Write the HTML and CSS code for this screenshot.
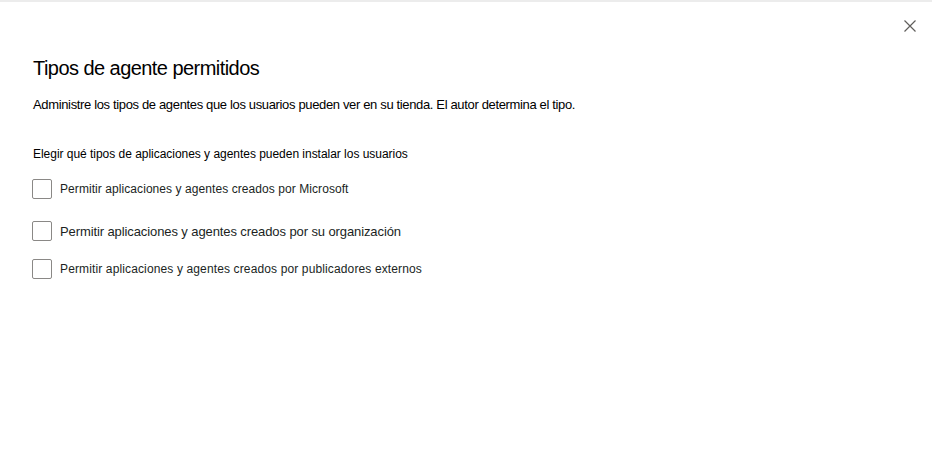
FILE: index.html
```html
<!DOCTYPE html>
<html lang="es">
<head>
<meta charset="utf-8">
<link rel="stylesheet" href="styles.css">
</head>
<body>
<div class="panel">
  <div class="top">
    <button class="close" aria-label="Cerrar">
      <svg width="12" height="12" viewBox="0 0 12 12"><path d="M0.5 0.5 L11.5 11.5 M11.5 0.5 L0.5 11.5" stroke="#605e5c" stroke-width="1.2" fill="none"/></svg>
    </button>
  </div>
  <h1 class="title">Tipos de agente permitidos</h1>
  <p class="desc">Administre los tipos de agentes que los usuarios pueden ver en su tienda. El autor determina el tipo.</p>
  <p class="label">Elegir qué tipos de aplicaciones y agentes pueden instalar los usuarios</p>
  <div class="options">
    <label class="opt"><span class="box"></span><span class="txt">Permitir aplicaciones y agentes creados por Microsoft</span></label>
    <label class="opt opt2"><span class="box"></span><span class="txt big">Permitir aplicaciones y agentes creados por su organización</span></label>
    <label class="opt opt3"><span class="box"></span><span class="txt wide">Permitir aplicaciones y agentes creados por publicadores externos</span></label>
  </div>
</div>
</body>
</html>
```
FILE: styles.css
```css
html, body { margin: 0; padding: 0; background: #fff; }
body { font-family: "Liberation Sans", Arial, sans-serif; color: #201f1e; }
.panel {
  width: 932px; height: 450px; box-sizing: border-box;
  border-top: 2px solid #ececec;
  padding: 0 0 0 32px;
}
.top { display: flex; justify-content: flex-end; padding: 18px 16px 0 0; height: 14px; }
.close { border: 0; background: none; padding: 0; width: 12px; height: 12px; display: flex; }
.title { font-size: 20px; font-weight: 400; margin: 20px 0 0 1px; line-height: 28px; color: #000; letter-spacing: -0.55px; }
.desc { font-size: 13px; margin: 14px 0 0 1px; line-height: 18px; color: #000; letter-spacing: -0.35px; }
.label { font-size: 12px; margin: 32px 0 0 1px; line-height: 16px; color: #000; letter-spacing: -0.03px; }
.options { display: flex; flex-direction: column; margin-top: 17px; }
.opt { display: flex; align-items: center; gap: 8px; height: 20px; }
.opt2 { margin-top: 22px; }
.opt3 { margin-top: 18px; }
.box { width: 18px; height: 18px; border: 1px solid #8a8886; border-radius: 2px; flex: none; }
.txt { font-size: 12px; color: #201f1e; letter-spacing: 0.07px; }
.txt.big { font-size: 13px; letter-spacing: -0.1px; }
.txt.wide { letter-spacing: 0.13px; }
```
